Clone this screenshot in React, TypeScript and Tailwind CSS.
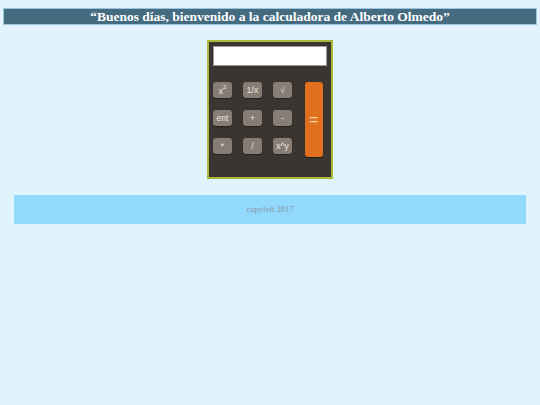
const KEYS = [
  ['x²', '1/x', '√'],
  ['ent', '+', '-'],
  ['*', '/', 'x^y'],
];

function Key({ label }: { label: string }) {
  const sup = label === 'x²';
  return (
    <button className="w-[19px] h-[16px] rounded-[3px] bg-[#877d74] text-[#ece8e4] text-[8.5px] leading-none flex items-center justify-center shadow-[0_1px_1px_rgba(0,0,0,0.4)] font-['Liberation_Sans',Arial,sans-serif]">
      {sup ? (
        <span className="flex items-start">
          <span className="mt-[2px]">x</span>
          <span className="text-[6px] -mt-[1px]">2</span>
        </span>
      ) : (
        label
      )}
    </button>
  );
}

export default function App() {
  return (
    <div className="min-h-[405px] bg-[#e1f4fe] pt-[8px] px-[3px] font-['Liberation_Serif','Times_New_Roman',serif]">
      <h1 className="h-[17px] bg-[#456b80] border border-[#9cc4dc] text-white font-bold text-[13.5px] leading-[15px] text-center">
        “Buenos días, bienvenido a la calculadora de Alberto Olmedo”
      </h1>

      <div className="flex justify-center mt-[15px]">
        <div className="w-[126px] h-[139px] border-2 border-[#aab83a] bg-[#3a3530] pt-[4px] pl-[4px]">
          <div className="w-[114px] h-[20px] bg-white border border-[#9a9a9a]" />
          <div className="flex mt-[16px]">
            <div className="flex flex-col gap-[12px]">
              {KEYS.map((row, i) => (
                <div key={i} className="flex gap-[11px]">
                  {row.map((k) => (
                    <Key key={k} label={k} />
                  ))}
                </div>
              ))}
            </div>
            <button className="ml-[13px] w-[18px] h-[75px] rounded-[3px] bg-[#e0701e] text-[#f7d6a8] text-[16px] leading-none flex items-center justify-center shadow-[0_1px_1px_rgba(0,0,0,0.4)] font-['Liberation_Sans',Arial,sans-serif]">
              =
            </button>
          </div>
        </div>
      </div>

      <footer className="mt-[16px] mx-[11px] h-[29px] bg-[#91d9fd] flex items-center justify-center text-[8.5px] text-[#8797a2]">
        copyleft 2017
      </footer>
    </div>
  );
}
